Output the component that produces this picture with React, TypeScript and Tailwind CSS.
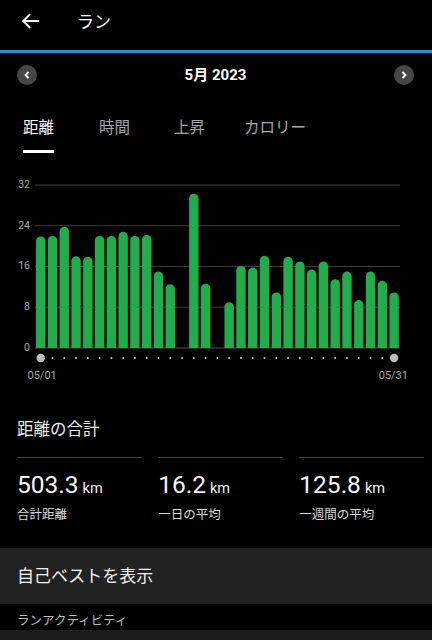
const data = [21.9, 22, 23.8, 18, 17.9, 22, 22, 22.8, 22, 22.2, 15, 12.5, 0, 30.3, 12.6, 0, 9, 16.1, 15.8, 18.1, 10.9, 17.9, 17, 15.4, 17, 13.5, 15, 9.4, 15, 13.2, 10.9];

const BASE = 348;
const SCALE = 163 / 32;
const PITCH = 11.78;
const BW = 9.4;

function Chart() {
  const grid = [32, 24, 16, 8, 0];
  return (
    <svg width="432" height="237" viewBox="0 153 432 237" className="block">
      {grid.map((g) => {
        const y = BASE - g * SCALE;
        return (
          <g key={g}>
            <line x1="35" x2="400" y1={y} y2={y} stroke={g === 0 ? "#555" : "#3c3c3c"} strokeWidth="1" />
            <text x="30" y={y} textAnchor="end" dominantBaseline="middle" fill="#a8a8a8" fontSize="10.5">
              {g}
            </text>
          </g>
        );
      })}
      {data.map((v, i) => {
        if (v <= 0) return null;
        const x = 36 + i * PITCH;
        const top = BASE - v * SCALE;
        const r = BW / 2;
        const d = `M${x} ${BASE} L${x} ${top + r} A${r} ${r} 0 0 1 ${x + BW} ${top + r} L${x + BW} ${BASE} Z`;
        return <path key={i} d={d} fill="#1fae4a" />;
      })}
      {data.map((_, i) => {
        const cx = 36 + i * PITCH + BW / 2;
        if (i === 0 || i === data.length - 1) {
          return <circle key={i} cx={cx} cy={358} r={4.2} fill="#bdbdbd" />;
        }
        return <circle key={i} cx={cx} cy={358} r={1} fill="#d0d0d0" />;
      })}
      <text x="27.5" y="376" dominantBaseline="middle" fill="#a8a8a8" fontSize="11">
        05/01
      </text>
      <text x="408" y="376" textAnchor="end" dominantBaseline="middle" fill="#a8a8a8" fontSize="11">
        05/31
      </text>
    </svg>
  );
}

function Stat({ value, label }: { value: string; label: string }) {
  return (
    <div className="border-t border-[#444]">
      <div className="pt-[13px] text-[24.5px] leading-[28px] text-[#f5f5f5]">
        {value}
        <span className="ml-[4px] text-[14.5px]">km</span>
      </div>
      <div className="mt-[4px] text-[12.5px] leading-[16px] text-[#dcdcdc]">{label}</div>
    </div>
  );
}

export default function App() {
  return (
    <div className="w-[432px] h-[640px] overflow-hidden bg-black text-white font-['Roboto','Noto_Sans_CJK_JP',sans-serif]">
      <header className="h-[44px] flex items-center">
        <svg className="ml-[21px] -mt-[2px]" width="18" height="16" viewBox="0 0 18 16" fill="none" stroke="white" strokeWidth="2" strokeLinecap="square">
          <path d="M17 8H2.5M8.5 1.8L2.3 8l6.2 6.2" />
        </svg>
        <span className="ml-[38px] text-[17px] leading-[22px]">ラン</span>
      </header>
      <div className="h-[6px]" />
      <div className="h-[3px] bg-[#2d8fd5]" />
      <div className="h-[44px] flex items-center justify-between pl-[17px] pr-[18px]">
        <div className="w-[20px] h-[20px] rounded-full bg-[#464646] flex items-center justify-center">
          <svg width="6" height="8" viewBox="0 0 6 8" fill="none" stroke="white" strokeWidth="1.8">
            <path d="M4.5 1L1.5 4l3 3" />
          </svg>
        </div>
        <span className="text-[15px] leading-[20px] font-bold">5月 2023</span>
        <div className="w-[20px] h-[20px] rounded-full bg-[#464646] flex items-center justify-center">
          <svg width="6" height="8" viewBox="0 0 6 8" fill="none" stroke="white" strokeWidth="1.8">
            <path d="M1.5 1L4.5 4l-3 3" />
          </svg>
        </div>
      </div>
      <div className="h-[56px] flex items-start pl-[23px] pt-[21px] text-[15.5px] leading-[20px]">
        <div className="w-[76px]">
          <div className="inline-flex flex-col">
            <span className="text-white">距離</span>
            <div className="mt-[12px] h-[3px] bg-white" />
          </div>
        </div>
        <div className="w-[75px] text-[#a8a8a8]">時間</div>
        <div className="w-[70px] text-[#a8a8a8]">上昇</div>
        <div className="text-[#a8a8a8]">カロリー</div>
      </div>
      <Chart />
      <section className="pt-[30px]">
        <h2 className="pl-[17px] text-[16.5px] leading-[20px] text-[#eeeeee] font-normal">距離の合計</h2>
        <div className="mt-[17px] pl-[17px] pr-[8px] grid grid-cols-3 gap-x-[16.5px]">
          <Stat value="503.3" label="合計距離" />
          <Stat value="16.2" label="一日の平均" />
          <Stat value="125.8" label="一週間の平均" />
        </div>
      </section>
      <div className="mt-[25px] h-[56px] bg-[#222222] flex items-center pl-[17px] text-[17px] leading-[22px] text-[#f0f0f0]">
        自己ベストを表示
      </div>
      <div className="h-[26px] pt-[9px] pl-[17px] text-[12.5px] leading-[16px] text-[#bdbdbd]">ランアクティビティ</div>
      <div className="h-[20px] bg-[#1c1c1c]" />
    </div>
  );
}
